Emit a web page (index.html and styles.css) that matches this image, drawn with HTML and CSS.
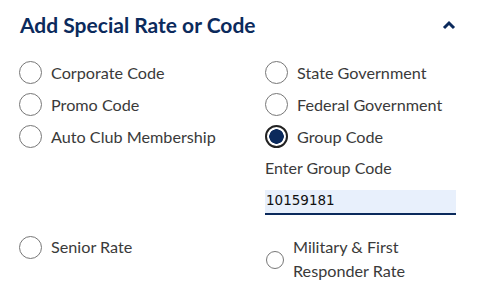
FILE: index.html
```html
<!DOCTYPE html>
<html lang="en">
<head>
    <meta charset="UTF-8">
    <title>Add Special Rate or Code</title>
    <link rel="stylesheet" href="styles.css">
</head>
<body>
    <div class="rate-panel">
        <div class="rate-header">
            <h2>Add Special Rate or Code</h2>
            <svg class="chevron" width="14" height="10" viewBox="0 0 14 10">
                <path d="M2 8 L7 3 L12 8" fill="none" stroke="#0b2a5c" stroke-width="3"/>
            </svg>
        </div>

        <div class="rate-options">
            <label class="option"><input type="radio" name="rate"> Corporate Code</label>
            <label class="option"><input type="radio" name="rate"> State Government</label>
            <label class="option"><input type="radio" name="rate"> Promo Code</label>
            <label class="option"><input type="radio" name="rate"> Federal Government</label>
            <label class="option"><input type="radio" name="rate"> Auto Club Membership</label>
            <label class="option"><input type="radio" name="rate" checked> Group Code</label>

            <div></div>
            <div class="group-field">
                <div class="field-label">Enter Group Code</div>
                <div class="field-input">10159181</div>
            </div>

            <label class="option option-low"><input type="radio" name="rate"> Senior Rate</label>
            <label class="option option-low option-small"><input type="radio" name="rate"> <span>Military &amp; First<br>Responder Rate</span></label>
        </div>
    </div>
</body>
</html>
```

FILE: styles.css
```css
body {
    margin: 0;
    background: #fff;
    font-family: Lato, "Open Sans", sans-serif;
    color: #3a3a3a;
}
.rate-panel {
    width: 491px;
    height: 298px;
    padding: 0 35px 0 19px;
    box-sizing: border-box;
}
.rate-header {
    display: flex;
    justify-content: space-between;
    align-items: center;
    height: 48px;
    padding-left: 1px;
}
.rate-header h2 {
    margin: 0;
    font-size: 21px;
    font-weight: 700;
    color: #0b2a5c;
}
.chevron {
    margin-top: 2px;
}
.rate-options {
    display: grid;
    grid-template-columns: 246px 1fr;
    margin-top: 8px;
}
.option {
    display: flex;
    align-items: center;
    height: 32px;
    font-size: 16.2px;
    gap: 9px;
}
.option input {
    appearance: none;
    margin: 0;
    width: 23px;
    height: 23px;
    border: 1px solid #777;
    border-radius: 50%;
    box-sizing: border-box;
    background: #fff;
}
.option input:checked {
    border: 2px solid #222;
    background: radial-gradient(circle, #0b2a5c 0 7px, #fff 7.5px);
}
.group-field {
    padding-top: 4px;
    font-size: 16px;
}
.field-label {
    line-height: 24px;
}
.field-input {
    margin-top: 10px;
    width: 191px;
    height: 25px;
    box-sizing: border-box;
    padding: 2px 0 0 1px;
    background: #e8f0fc;
    border-bottom: 2px solid #0b2a5c;
    font-family: "DejaVu Sans", sans-serif;
    font-size: 13.5px;
    color: #111;
}
.option-low {
    margin-top: 20px;
    height: 24px;
    align-items: flex-start;
    line-height: 24px;
}
.option-low input {
    margin-top: 1px;
}
.option-small {
    align-items: center;
    height: 48px;
}
.option-small input {
    width: 18px;
    height: 18px;
    margin: 2px 0 0 1px;
}
```
